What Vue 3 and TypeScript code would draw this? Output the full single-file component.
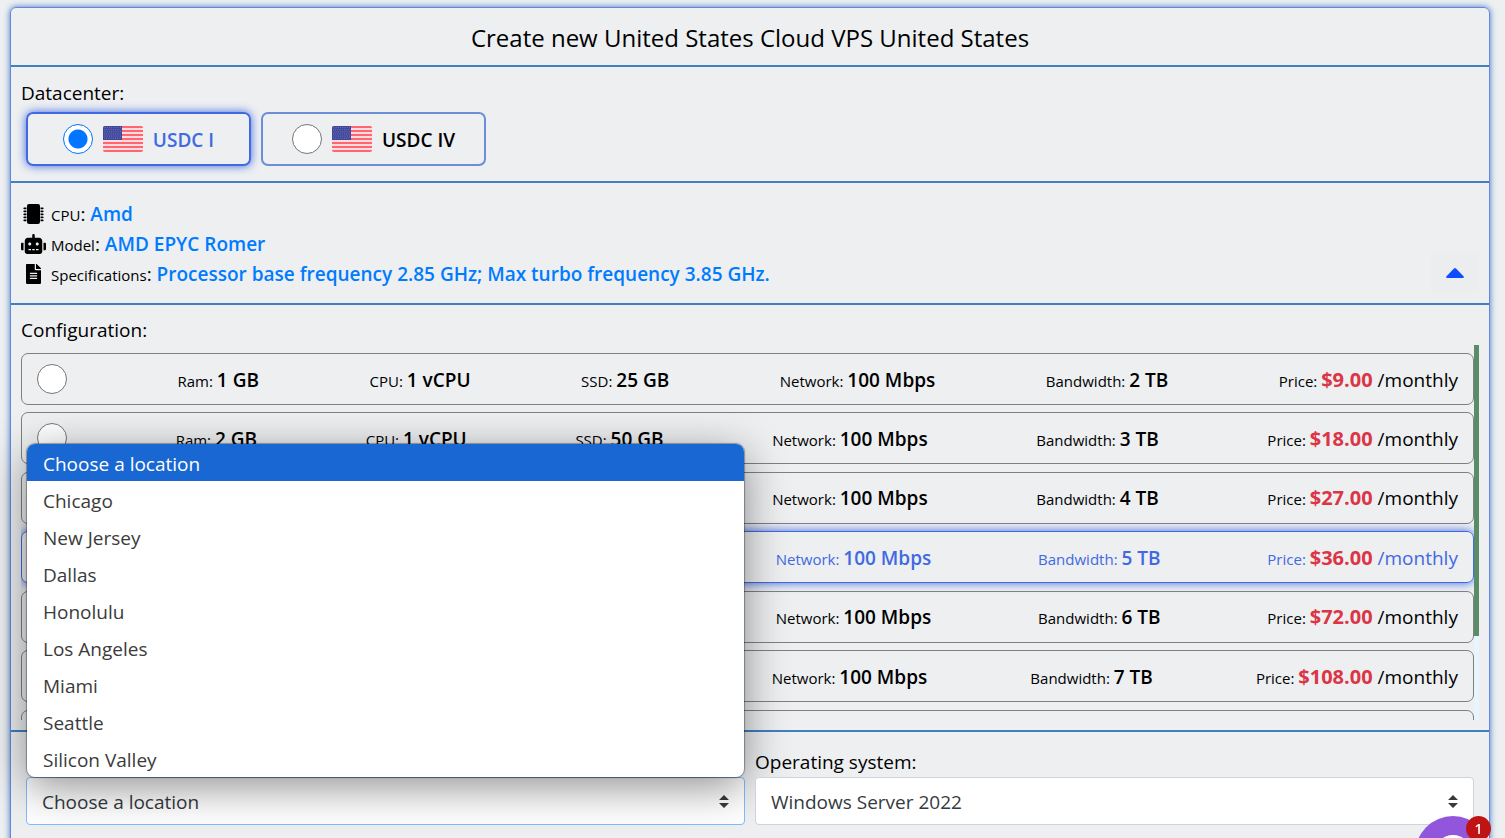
<script setup lang="ts">
import { ref } from 'vue'

interface Plan {
  ram: string
  cpu: string
  ssd: string
  bandwidth: string
  price: string
}

const datacenters = ['USDC I', 'USDC IV']
const datacenter = ref('USDC I')

const plans: Plan[] = [
  { ram: '1 GB', cpu: '1 vCPU', ssd: '25 GB', bandwidth: '2 TB', price: '$9.00' },
  { ram: '2 GB', cpu: '1 vCPU', ssd: '50 GB', bandwidth: '3 TB', price: '$18.00' },
  { ram: '4 GB', cpu: '2 vCPU', ssd: '80 GB', bandwidth: '4 TB', price: '$27.00' },
  { ram: '8 GB', cpu: '4 vCPU', ssd: '160 GB', bandwidth: '5 TB', price: '$36.00' },
  { ram: '8 GB', cpu: '6 vCPU', ssd: '320 GB', bandwidth: '6 TB', price: '$72.00' },
  { ram: '32 GB', cpu: '8 vCPU', ssd: '640 GB', bandwidth: '7 TB', price: '$108.00' },
  { ram: '48 GB', cpu: '12 vCPU', ssd: '960 GB', bandwidth: '8 TB', price: '$144.00' },
  { ram: '64 GB', cpu: '16 vCPU', ssd: '1280 GB', bandwidth: '9 TB', price: '$180.00' },
]
const plan = ref(3)

const locations = [
  'Choose a location',
  'Chicago',
  'New Jersey',
  'Dallas',
  'Honolulu',
  'Los Angeles',
  'Miami',
  'Seattle',
  'Silicon Valley',
]
const location = ref('Choose a location')
const menuOpen = ref(true)
const os = ref('Windows Server 2022')

function choose(name: string) {
  location.value = name
  menuOpen.value = false
}
</script>

<template>
  <div class="page">
    <main class="card">
      <h1 class="title">Create new United States Cloud VPS United States</h1>

      <section class="section datacenter">
        <p class="heading">Datacenter:</p>
        <div class="choices">
          <label
            v-for="name in datacenters"
            :key="name"
            class="choice"
            :class="{ active: name === datacenter }"
          >
            <input v-model="datacenter" class="radio" type="radio" name="datacenter" :value="name" />
            <svg class="flag" viewBox="0 0 40 26" aria-hidden="true">
              <clipPath id="flag-shape"><rect width="40" height="26" rx="2" /></clipPath>
              <g clip-path="url(#flag-shape)">
                <rect width="40" height="26" fill="#ffdcdf" />
                <rect v-for="n in 7" :key="n" :y="(n - 1) * 4" width="40" height="2" fill="#ff6670" />
                <rect width="19" height="14" fill="#40479b" />
                <g fill="#8085c2">
                  <template v-for="r in 6" :key="r">
                    <rect v-for="c in 8" :key="c" :x="c * 2.2 - 1.2 + (r % 2) * 0.6" :y="r * 2.1 - 0.9" width="0.9" height="0.9" />
                  </template>
                </g>
              </g>
            </svg>
            <span class="choice-name">{{ name }}</span>
          </label>
        </div>
      </section>

      <section class="section processor">
        <ul class="facts">
          <li>
            <svg class="fact-icon" viewBox="0 0 25 20" aria-hidden="true">
              <rect x="6" y="0" width="13" height="20" rx="2" />
              <path
                v-for="n in 5"
                :key="n"
                :d="`M3 ${n * 3 + 0.4}h2.500v1.800H3l-.8-.9zM19.500 ${n * 3 + 0.4}h2.500l.8.9-.8.9h-2.500z`"
              />
            </svg>
            <span><small>CPU</small>: <b>Amd</b></span>
          </li>
          <li>
            <svg class="fact-icon" viewBox="0 0 640 512" aria-hidden="true">
              <path d="M32 224h32v192H32c-18 0-32-14-32-32V256c0-18 14-32 32-32zm512-48v272c0 35-29 64-64 64H160c-35 0-64-29-64-64V176c0-44 36-80 80-80h112V32c0-18 14-32 32-32s32 14 32 32v64h112c44 0 80 36 80 80zM264 256c0-22-18-40-40-40s-40 18-40 40 18 40 40 40 40-18 40-40zm-8 128h-64v32h64zm96 0h-64v32h64zm104-128c0-22-18-40-40-40s-40 18-40 40 18 40 40 40 40-18 40-40zm-8 128h-64v32h64zm192-128v128c0 18-14 32-32 32h-32V224h32c18 0 32 14 32 32z" />
            </svg>
            <span><small>Model</small>: <b>AMD EPYC Romer</b></span>
          </li>
          <li>
            <svg class="fact-icon" viewBox="0 0 384 512" aria-hidden="true">
              <path d="M224 136V0H24C11 0 0 11 0 24v464c0 13 11 24 24 24h336c13 0 24-11 24-24V160H248c-13 0-24-11-24-24zm64 236c0 7-5 12-12 12H108c-7 0-12-5-12-12v-8c0-7 5-12 12-12h168c7 0 12 5 12 12zm0-64c0 7-5 12-12 12H108c-7 0-12-5-12-12v-8c0-7 5-12 12-12h168c7 0 12 5 12 12zm0-72v8c0 7-5 12-12 12H108c-7 0-12-5-12-12v-8c0-7 5-12 12-12h168c7 0 12 5 12 12zm96-114v6H256V0h6c6 0 12 3 17 7l98 98c4 5 7 11 7 17z" />
            </svg>
            <span><small>Specifications</small>: <b>Processor base frequency 2.85 GHz; Max turbo frequency 3.85 GHz.</b></span>
          </li>
        </ul>
        <button class="collapse" type="button" aria-label="Collapse">
          <svg viewBox="0 0 18 10" aria-hidden="true"><path d="M8 .6.5 8.2C-.2 9 .2 10 1 10h16c.8 0 1.200-1 .5-1.800L10 .6a1.400 1.400 0 0 0-2 0z" /></svg>
        </button>
      </section>

      <section class="section configuration">
        <p class="heading">Configuration:</p>
        <div class="scroller">
          <div class="plan-list">
            <div class="plans">
              <label
                v-for="(item, i) in plans"
                :key="i"
                class="plan"
                :class="{ active: i === plan }"
              >
                <input v-model="plan" class="radio" type="radio" name="plan" :value="i" />
                <span>Ram: <b>{{ item.ram }}</b></span>
                <span>CPU: <b>{{ item.cpu }}</b></span>
                <span>SSD: <b>{{ item.ssd }}</b></span>
                <span>Network: <b>100 Mbps</b></span>
                <span>Bandwidth: <b>{{ item.bandwidth }}</b></span>
                <span>Price: <b class="price">{{ item.price }}</b><em> /monthly</em></span>
              </label>
            </div>
          </div>
          <div class="track"><div class="thumb"></div></div>
        </div>
      </section>

      <section class="section fields">
        <div class="field">
          <div class="select-wrap">
            <select
              v-model="location"
              class="select focused"
              aria-label="Location"
              @mousedown.prevent="menuOpen = !menuOpen"
            >
              <option v-for="name in locations" :key="name">{{ name }}</option>
            </select>
            <svg class="arrows" viewBox="0 0 10 13" aria-hidden="true"><path d="M5 0 10 5H0zM0 8h10l-5 5z" /></svg>
            <ul v-if="menuOpen" class="menu" role="listbox" aria-label="Location">
              <li
                v-for="name in locations"
                :key="name"
                role="option"
                :aria-selected="name === location"
                :class="{ chosen: name === location }"
                @click="choose(name)"
              >
                {{ name }}
              </li>
            </ul>
          </div>
        </div>
        <div class="field">
          <label class="heading" for="os">Operating system:</label>
          <div class="select-wrap">
            <select id="os" v-model="os" class="select">
              <option>Windows Server 2022</option>
            </select>
            <svg class="arrows" viewBox="0 0 10 13" aria-hidden="true"><path d="M5 0 10 5H0zM0 8h10l-5 5z" /></svg>
          </div>
        </div>
      </section>
    </main>

    <button class="chat" type="button" aria-label="Chat">
      <svg viewBox="0 0 76 76" aria-hidden="true">
        <circle cx="38" cy="38" r="38" fill="#9156dc" />
        <circle cx="38" cy="38" r="19" fill="#fff" />
      </svg>
      <span class="badge">1</span>
    </button>
  </div>
</template>

<style>
body {
  margin: 0;
  background: #edeff1;
}
</style>

<style scoped>
* {
  box-sizing: border-box;
}

.page {
  height: 100vh;
  overflow: hidden;
  padding: 7px 15px 0 10px;
  background: #edeff1;
  color: #000;
  font-family: "Open Sans", "Noto Sans", sans-serif;
  font-size: 19px;
  line-height: 30px;
}

.card {
  min-height: 110vh;
  border: 1px solid #6b83e0;
  border-radius: 6px;
  box-shadow: 0 0 6px #3a7ac0;
}

.title {
  margin: 0;
  padding: 15px 10px 12px;
  font-size: 24px;
  font-weight: 400;
  line-height: 30px;
  text-align: center;
}

.section {
  border-top: 2px solid #3f7fc4;
  padding: 0 10px;
}

.heading {
  display: block;
  margin: 0;
  line-height: 30px;
}

.datacenter {
  padding-top: 11px;
  padding-bottom: 15px;
}

.choices {
  display: flex;
  gap: 10px;
  margin-top: 4px;
  padding-left: 5px;
}

.choice {
  display: flex;
  align-items: center;
  justify-content: center;
  gap: 10px;
  width: 225px;
  height: 54px;
  border: 2px solid #6a8fd8;
  border-radius: 7px;
  font-weight: 600;
}

.choice-name {
  padding-top: 2px;
}

.choice.active {
  border-color: #4169e1;
  box-shadow: 0 0 10px #4169e1;
  color: #4169e1;
}

.radio {
  flex: none;
  width: 30px;
  height: 30px;
  margin: 0;
  border: 1px solid #767676;
  border-radius: 50%;
  background: #fff;
  appearance: none;
}

.radio:checked {
  border-color: #0075ff;
  background: radial-gradient(circle, #0075ff 9px, #fff 10px);
}

.flag {
  width: 40px;
  height: 26px;
}

.processor {
  display: flex;
  align-items: flex-end;
  justify-content: space-between;
  padding-top: 16px;
  padding-bottom: 14px;
}

.facts {
  margin: 0;
  padding: 0;
  list-style: none;
}

.facts li {
  display: flex;
  align-items: center;
  gap: 5px;
  height: 30px;
}

.fact-icon {
  width: 25px;
  height: 20px;
}

.facts small {
  font-size: 15px;
}

.facts b {
  color: #007bff;
  font-weight: 600;
}

.collapse {
  display: flex;
  align-items: center;
  justify-content: center;
  width: 48px;
  height: 40px;
  margin-bottom: -4px;
  border: 0;
  border-radius: 4px;
  background: #ebedef;
}

.collapse svg {
  width: 18px;
  height: 10px;
  fill: #0d4dff;
}

.configuration {
  padding-top: 10px;
  padding-bottom: 10px;
}

.scroller {
  display: flex;
  height: 375px;
}

.plan-list {
  flex: 1;
  overflow-y: auto;
  scrollbar-width: none;
}

.plans {
  display: grid;
  align-content: space-between;
  height: 484px;
  padding: 8px 0;
}

.plan {
  display: flex;
  align-items: center;
  justify-content: space-between;
  height: 52px;
  padding: 0 15px;
  border: 1px solid #808080;
  border-radius: 7px;
  font-size: 15px;
}

.plan span {
  padding-top: 2px;
}

.plan b {
  font-size: 19px;
  font-weight: 600;
}

.plan em {
  font-size: 19px;
  font-style: normal;
}

.plan.active {
  border-color: #4169e1;
  box-shadow: 0 0 10px #4169e1;
  color: #4169e1;
}

.plan .price {
  color: #dc3545;
  font-size: 20px;
  font-weight: 700;
}

.track {
  width: 5px;
  background: #e8f5ff;
}

.thumb {
  height: 291px;
  background: #5b8c68;
}

.fields {
  display: grid;
  grid-template-columns: 1fr 1fr;
  align-items: end;
  gap: 10px;
  padding: 15px 15px 20px;
}

.select-wrap {
  position: relative;
}

.select {
  display: block;
  width: 100%;
  height: 48px;
  padding: 2px 40px 0 15px;
  border: 1px solid #ced4da;
  border-radius: 4px;
  background: #fff;
  color: #343a40;
  font: inherit;
  appearance: none;
}

.focused {
  border-color: #80bdff;
}

.arrows {
  position: absolute;
  top: 18px;
  right: 16px;
  width: 10px;
  height: 13px;
  fill: #343a40;
  pointer-events: none;
}

.menu {
  position: absolute;
  right: 1px;
  bottom: 100%;
  left: 1px;
  overflow: hidden;
  margin: 0;
  padding: 0;
  border-radius: 8px;
  background: #fff;
  box-shadow: 0 0 1px 1px #00000055, 0 10px 44px #00000070;
  color: #3b3b3b;
  list-style: none;
}

.menu li {
  padding: 5px 16px 2px;
}

.menu .chosen {
  background: #1967d2;
  color: #fff;
}

.chat {
  position: fixed;
  right: 14px;
  bottom: -54px;
  width: 76px;
  height: 76px;
  padding: 0;
  border: 0;
  background: none;
}

.badge {
  position: absolute;
  top: 0;
  right: 0;
  width: 25px;
  height: 25px;
  border-radius: 50%;
  background: #c01414;
  color: #fff;
  font-family: "Open Sans", sans-serif;
  font-size: 14px;
  font-weight: 600;
  line-height: 25px;
}
</style>
